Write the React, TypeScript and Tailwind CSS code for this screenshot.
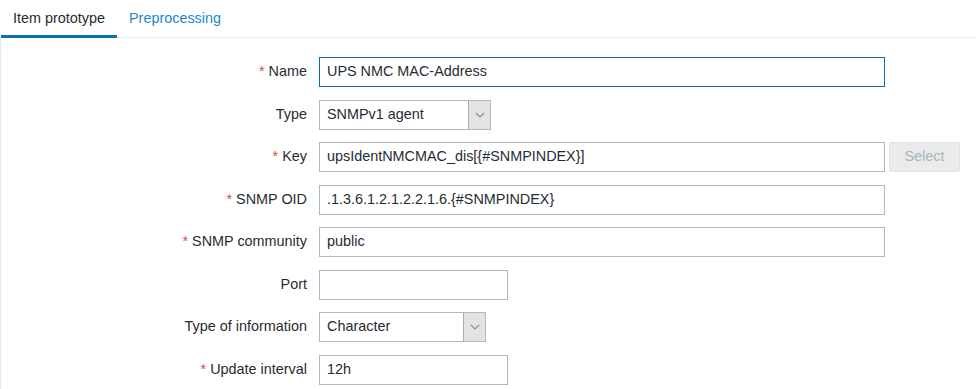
import React from "react";

const Chevron = () => (
  <svg width="10" height="6" viewBox="0 0 10 6" fill="none">
    <path d="M0.8 0.8 L5 5 L9.2 0.8" stroke="#768d99" strokeWidth="1.1" />
  </svg>
);

function Label({ text, req }: { text: string; req?: boolean }) {
  return (
    <div className="w-[306px] shrink-0 text-right flex items-center justify-end">
      {req && <span className="text-[#e04646] mr-[4px] text-[14.4px]">*</span>}
      <span>{text}</span>
    </div>
  );
}

function Input({ value, w, focus }: { value: string; w: string; focus?: boolean }) {
  return (
    <div
      className={`${w} h-[30px] flex items-center px-[7px] bg-white border ${
        focus ? "border-[#0f68a9]" : "border-[#acbbc2]"
      }`}
    >
      {value}
    </div>
  );
}

function Select({ value, w }: { value: string; w: string }) {
  return (
    <div className={`${w} h-[30px] flex bg-white border border-[#acbbc2]`}>
      <div className="flex-1 flex items-center px-[7px]">{value}</div>
      <div className="w-[22px] bg-[#e3e3e3] border-l border-[#a4b0b7] flex items-center justify-center">
        <Chevron />
      </div>
    </div>
  );
}

export default function App() {
  return (
    <div
      className="w-[976px] h-[389px] bg-white text-[#1f2c33] text-[14.4px] overflow-hidden"
      style={{ fontFamily: '"Liberation Sans", Arial, sans-serif' }}
    >
      <div className="flex h-[38px] border-b border-[#ebeef0] pl-[1px]">
        <div className="h-[38px] -mb-px px-[12px] pt-[3px] border-b-[3px] border-[#0a70b4] flex items-center text-[#1f2c33]">
          Item prototype
        </div>
        <div className="h-[35px] px-[12px] pt-[3px] flex items-center text-[#1e87d0]">Preprocessing</div>
      </div>
      <div className="border-l border-[#e4e9ec] h-[351px] pt-[19px]">
        <div className="flex flex-col gap-[12.5px]">
          <div className="flex items-center gap-[12px]">
            <Label text="Name" req />
            <Input value="UPS NMC MAC-Address" w="w-[566px]" focus />
          </div>
          <div className="flex items-center gap-[12px]">
            <Label text="Type" />
            <Select value="SNMPv1 agent" w="w-[172px]" />
          </div>
          <div className="flex items-center gap-[12px]">
            <Label text="Key" req />
            <div className="flex gap-[4px]">
              <Input value="upsIdentNMCMAC_dis[{#SNMPINDEX}]" w="w-[566px]" />
              <div className="w-[71px] h-[30px] rounded-[2px] bg-[#ebebeb] border border-[#dfe4e7] text-[#a8b4bb] flex items-center justify-center">
                Select
              </div>
            </div>
          </div>
          <div className="flex items-center gap-[12px]">
            <Label text="SNMP OID" req />
            <Input value=".1.3.6.1.2.1.2.2.1.6.{#SNMPINDEX}" w="w-[566px]" />
          </div>
          <div className="flex items-center gap-[12px]">
            <Label text="SNMP community" req />
            <Input value="public" w="w-[566px]" />
          </div>
          <div className="flex items-center gap-[12px]">
            <Label text="Port" />
            <Input value="" w="w-[189px]" />
          </div>
          <div className="flex items-center gap-[12px]">
            <Label text="Type of information" />
            <Select value="Character" w="w-[167px]" />
          </div>
          <div className="flex items-center gap-[12px]">
            <Label text="Update interval" req />
            <Input value="12h" w="w-[189px]" />
          </div>
        </div>
      </div>
    </div>
  );
}
